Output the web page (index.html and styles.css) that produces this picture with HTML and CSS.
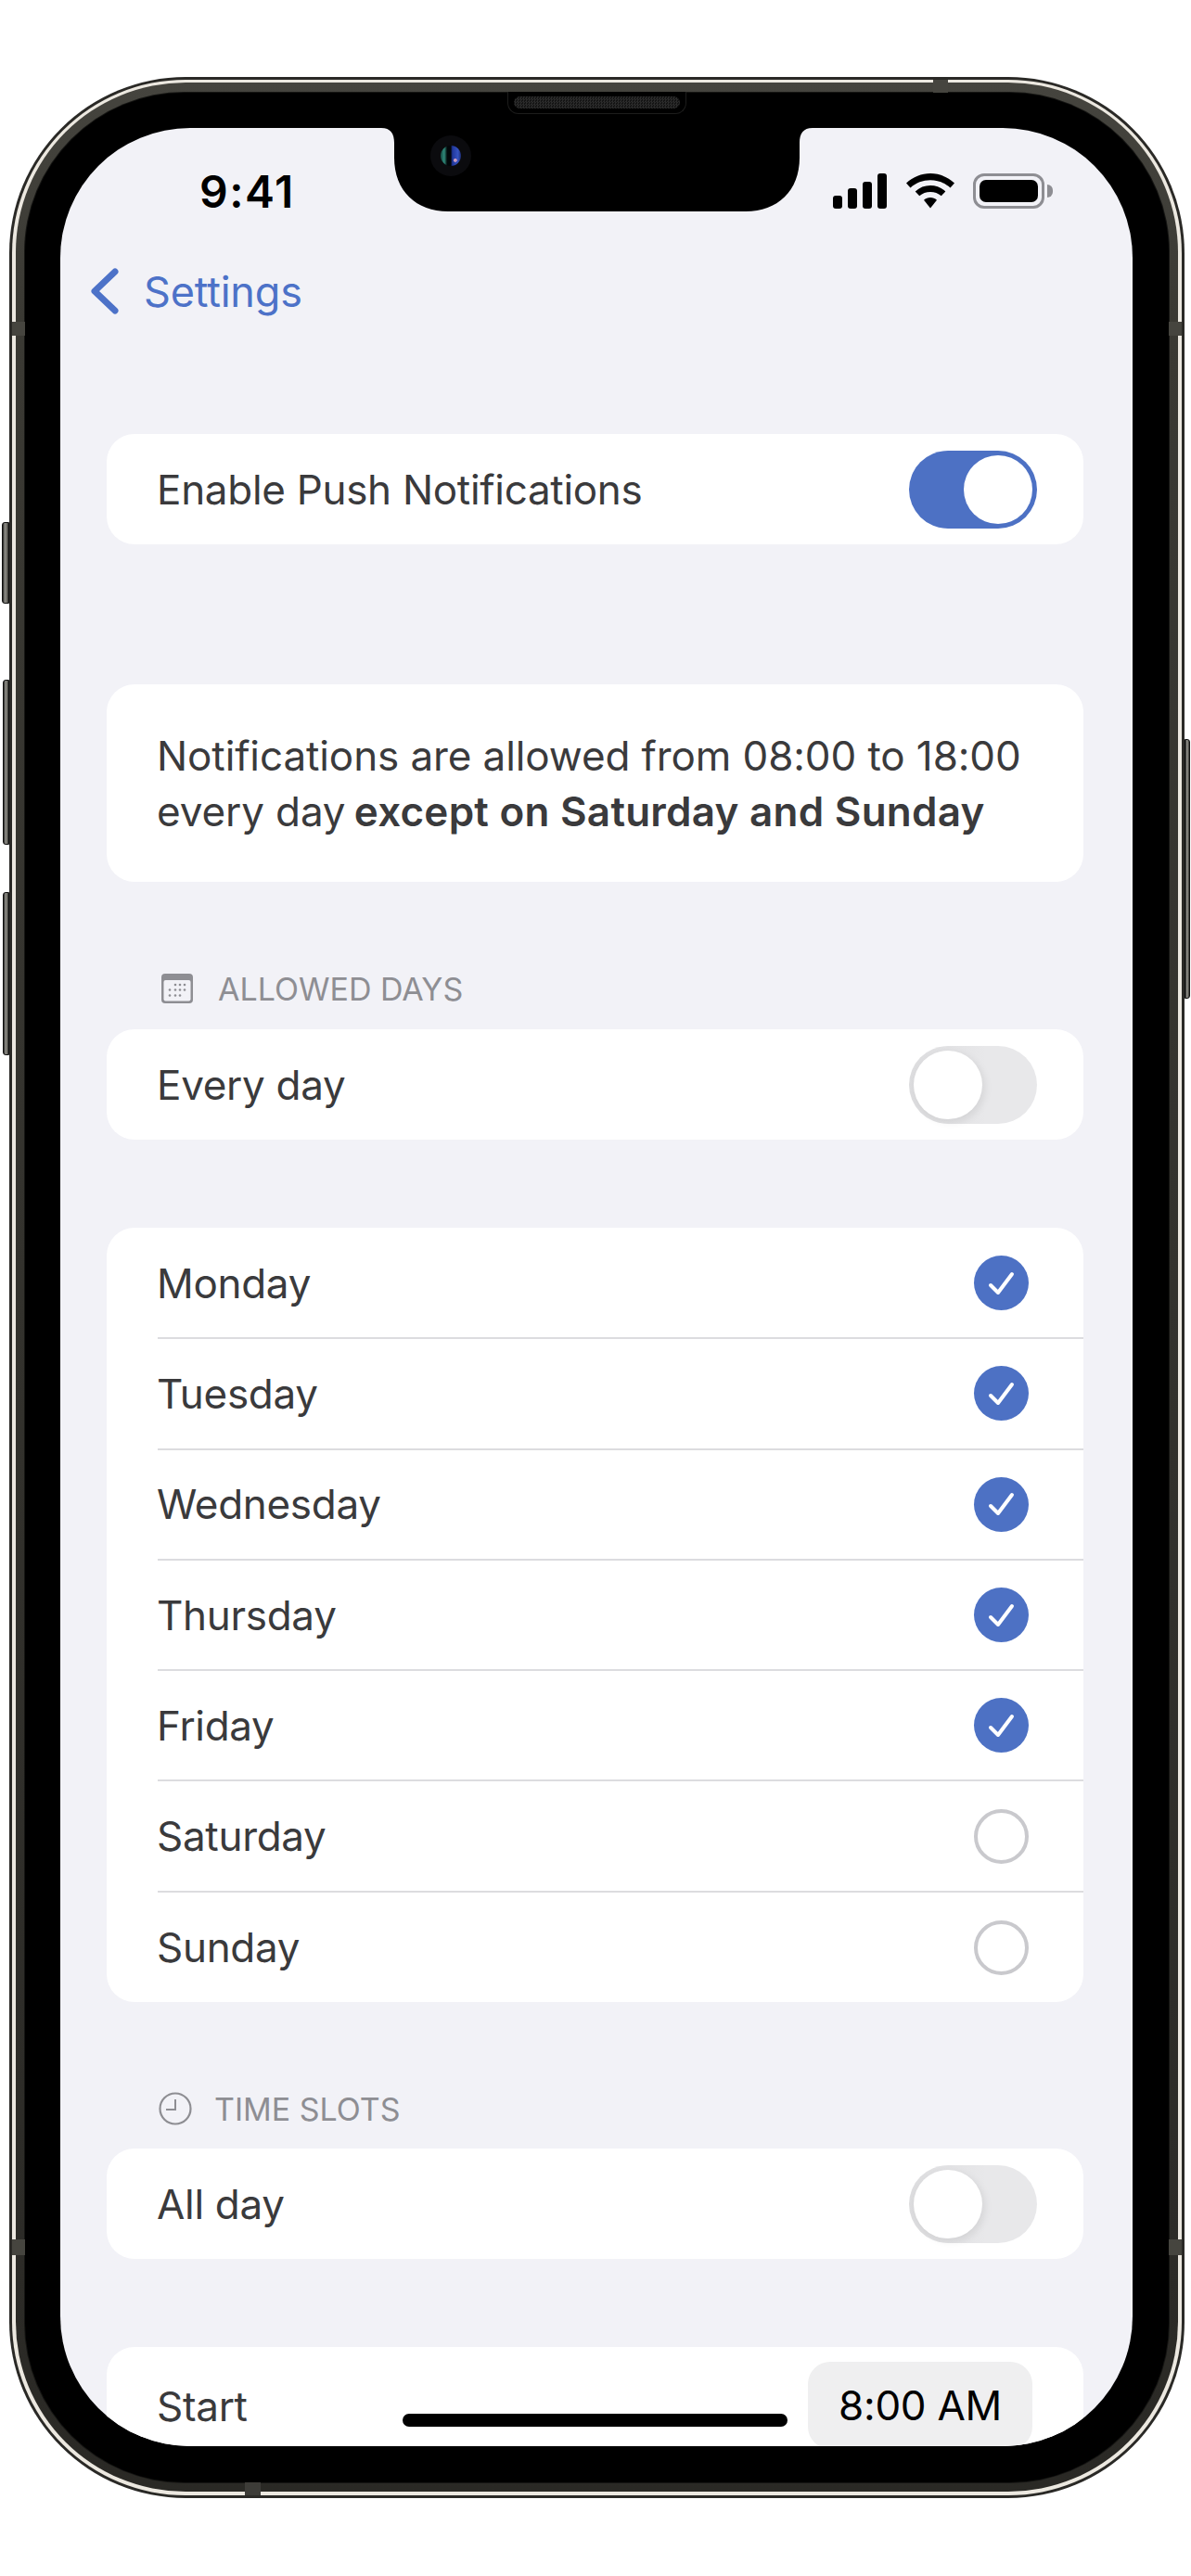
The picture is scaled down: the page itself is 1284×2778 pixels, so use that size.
FILE: index.html
```html
<!DOCTYPE html>
<html lang="en">
<head>
<meta charset="utf-8">
<title>Notification settings</title>
<link rel="stylesheet" href="styles.css">
</head>
<body>
<div class="device">
  <span class="side mute"></span>
  <span class="side vol-up"></span>
  <span class="side vol-down"></span>
  <span class="side power"></span>
  <span class="band band-lt"></span>
  <span class="band band-lb"></span>
  <span class="band band-rt"></span>
  <span class="band band-rb"></span>
  <span class="band band-top"></span>
  <span class="band band-bottom"></span>
  <div class="ring-light">
    <div class="ring-band">
      <div class="bezel">
        <div class="speaker"><span class="grille"></span></div>
        <div class="screen">
          <svg class="notch" width="465" height="90" viewBox="0 0 465 90"><path d="M0 0C10 0 14 6 14 16V32C14 68 38 90 72 90H393C427 90 451 68 451 32V16C451 6 455 0 465 0Z" fill="#000"/></svg>
          <div class="camera"><span class="lens"></span></div>
          <header class="status">
            <span class="clock">9:41</span>
            <div class="status-icons">
              <svg width="59" height="38" viewBox="0 0 59 38" fill="#000"><rect x="0" y="24" width="10" height="14" rx="3"/><rect x="16" y="16" width="10" height="22" rx="3"/><rect x="32" y="9" width="10" height="29" rx="3"/><rect x="48" y="0" width="10" height="38" rx="3"/></svg>
              <svg width="52" height="38" viewBox="0 0 52 38" fill="#000"><path d="M26 0C35.500 0 44.500 3.700 52 10.500L47.500 15.500C41.500 10.200 34 7.300 26 7.300S10.500 10.200 4.500 15.500L0 10.500C7.500 3.700 16.500 0 26 0Z"/><path d="M26 13C32 13 37.700 15.200 42.300 19.400L37.800 24.300C34.500 21.400 30.400 19.900 26 19.900S17.500 21.400 14.200 24.300L9.700 19.400C14.300 15.200 20 13 26 13Z"/><path d="M26 26C28.600 26 31 26.900 33 28.700L26 37.500 19 28.700C21 26.900 23.400 26 26 26Z"/></svg>
              <div class="battery"><span class="battery-fill"></span></div>
              <span class="battery-cap"></span>
            </div>
          </header>
          <nav class="nav">
            <svg width="30" height="50" viewBox="0 0 30 50" fill="none"><path d="M26 4L4 25L26 46" stroke="#4d72c8" stroke-width="7" stroke-linecap="round" stroke-linejoin="round"/></svg>
            <span class="nav-title">Settings</span>
          </nav>
          <main class="content">
            <section class="card push">
              <div class="row"><span>Enable Push Notifications</span><span class="toggle on"><span class="thumb"></span></span></div>
            </section>
            <section class="card summary">
              <p>Notifications are allowed from 08:00 to 18:00<br>every day <strong>except on Saturday and Sunday</strong></p>
            </section>
            <h2 class="section-label days-label">
              <svg width="34" height="32" viewBox="0 0 34 32"><rect x="0" y="0" width="34" height="32" rx="4" fill="#8e8e93"/><rect x="2.500" y="7" width="29" height="22.500" rx="2" fill="#f2f2f7"/><g fill="#8e8e93"><circle cx="15" cy="12" r="1.300"/><circle cx="20" cy="12" r="1.300"/><circle cx="25" cy="12" r="1.300"/><circle cx="9" cy="17.500" r="1.300"/><circle cx="15" cy="17.500" r="1.300"/><circle cx="20" cy="17.500" r="1.300"/><circle cx="25" cy="17.500" r="1.300"/><circle cx="9" cy="23.500" r="1.300"/><circle cx="15" cy="23.500" r="1.300"/><circle cx="20" cy="23.500" r="1.300"/></g></svg>
              <span>ALLOWED DAYS</span>
            </h2>
            <section class="card">
              <div class="row"><span>Every day</span><span class="toggle"><span class="thumb"></span></span></div>
            </section>
            <section class="card days">
              <div class="day"><span>Monday</span><span class="check on"><svg width="30" height="26" viewBox="0 0 30 26" fill="none"><path d="M3 15L11 23L26 3" stroke="#fff" stroke-width="4" stroke-linecap="round" stroke-linejoin="round"/></svg></span></div>
              <div class="day"><span>Tuesday</span><span class="check on"><svg width="30" height="26" viewBox="0 0 30 26" fill="none"><path d="M3 15L11 23L26 3" stroke="#fff" stroke-width="4" stroke-linecap="round" stroke-linejoin="round"/></svg></span></div>
              <div class="day"><span>Wednesday</span><span class="check on"><svg width="30" height="26" viewBox="0 0 30 26" fill="none"><path d="M3 15L11 23L26 3" stroke="#fff" stroke-width="4" stroke-linecap="round" stroke-linejoin="round"/></svg></span></div>
              <div class="day"><span>Thursday</span><span class="check on"><svg width="30" height="26" viewBox="0 0 30 26" fill="none"><path d="M3 15L11 23L26 3" stroke="#fff" stroke-width="4" stroke-linecap="round" stroke-linejoin="round"/></svg></span></div>
              <div class="day"><span>Friday</span><span class="check on"><svg width="30" height="26" viewBox="0 0 30 26" fill="none"><path d="M3 15L11 23L26 3" stroke="#fff" stroke-width="4" stroke-linecap="round" stroke-linejoin="round"/></svg></span></div>
              <div class="day"><span>Saturday</span><span class="check"></span></div>
              <div class="day"><span>Sunday</span><span class="check"></span></div>
            </section>
            <h2 class="section-label slots-label">
              <svg width="36" height="36" viewBox="0 0 36 36" fill="none" stroke="#8e8e93" stroke-width="2.200"><circle cx="18" cy="18" r="16.500"/><path d="M18 8V19H8" stroke-width="2"/></svg>
              <span>TIME SLOTS</span>
            </h2>
            <section class="card">
              <div class="row"><span>All day</span><span class="toggle"><span class="thumb"></span></span></div>
            </section>
            <section class="card start">
              <div class="row time-row"><span>Start</span><span class="pill">8:00 AM</span></div>
            </section>
          </main>
          <span class="home"></span>
        </div>
      </div>
    </div>
  </div>
</div>
</body>
</html>
```
FILE: styles.css
```css
* { box-sizing: border-box; }
html, body { margin: 0; padding: 0; background: #fff; }
body { height: 2778px; overflow: hidden; font-family: Inter, "Liberation Sans", sans-serif; color: #3a3a3c; }

.device {
  position: relative;
  width: 1267px;
  height: 2611px;
  margin: 83px 0 0 10px;
  padding: 3px;
  border-radius: 190px;
  background: #2a2926;
}
.ring-light { height: 100%; padding: 3px 4px 4px; border-radius: 187px; background: #ece8e0; }
.ring-band {
  height: 100%;
  padding: 11px 10px 10px;
  border-radius: 183px;
  background: linear-gradient(#45443e, #3a3933 10%, #2c2b27 90%, #2a2925);
}
.bezel {
  position: relative;
  height: 100%;
  padding: 38px 39px 39px 38px;
  border-radius: 172px;
  background: #000;
  box-shadow: 0 0 0 1px #151513;
}

.side { position: absolute; background: linear-gradient(90deg, #1c1c1a, #8b8a85 35%, #77766f 70%, #2c2b28); border: 1px solid #111; }
.mute { left: -8px; top: 480px; width: 8px; height: 88px; border-radius: 3px 0 0 3px; }
.vol-up { left: -7px; top: 650px; width: 7px; height: 178px; border-radius: 3px 0 0 3px; }
.vol-down { left: -7px; top: 879px; width: 7px; height: 176px; border-radius: 3px 0 0 3px; }
.power { right: -6px; top: 714px; width: 6px; height: 280px; border-radius: 0 3px 3px 0; }

.band { position: absolute; z-index: 2; background: #46453f; }
.band-lt { left: 3px; top: 264px; width: 14px; height: 15px; }
.band-lb { left: 3px; top: 2332px; width: 14px; height: 17px; }
.band-rt { right: 3px; top: 264px; width: 14px; height: 15px; }
.band-rb { right: 3px; top: 2332px; width: 14px; height: 17px; }
.band-top { left: 996px; top: 3px; width: 16px; height: 14px; }
.band-bottom { left: 254px; bottom: 3px; width: 17px; height: 14px; background: #3d3c38; }

.speaker {
  position: absolute;
  left: 520px;
  top: -1px;
  width: 193px;
  height: 24px;
  padding: 5px 6px;
  border: 1px solid #1d1d1c;
  border-top: 0;
  border-radius: 0 0 12px 12px;
  background: #000;
}
.grille {
  display: block;
  height: 13px;
  border-radius: 7px;
  background: repeating-conic-gradient(#2b2b2b 0 25%, #141414 0 50%) 0 0 / 3px 3px;
}

.screen {
  position: relative;
  height: 100%;
  overflow: hidden;
  border-radius: 140px;
  background: #f2f2f7;
}
.notch { position: absolute; left: 346px; top: 0; }
.camera {
  position: absolute;
  left: 399px;
  top: 8px;
  width: 44px;
  height: 44px;
  display: flex;
  align-items: center;
  justify-content: center;
  border-radius: 50%;
  background: #0b0b0e;
}
.lens {
  width: 22px;
  height: 22px;
  border-radius: 50%;
  background: radial-gradient(circle at 72% 72%, #c79ac0 0 7%, transparent 10%),
              linear-gradient(90deg, #164a44, #2f8a7a 18%, #02080a 32%, #02060a 50%, #20379b 58%, #3653c0 85%, #1c2c70);
}

.status { position: relative; height: 124px; }
.clock {
  position: absolute;
  left: 150px;
  top: 47px;
  font-size: 48px;
  line-height: 44px;
  font-weight: 600;
  letter-spacing: 1.5px;
  color: #000;
}
.status-icons {
  position: absolute;
  left: 833px;
  top: 49px;
  display: flex;
  gap: 20px;
  align-items: flex-start;
}
.battery {
  width: 77px;
  height: 38px;
  padding: 4px;
  border: 3px solid #8e8e93;
  border-radius: 12px;
}
.battery-fill { display: block; height: 100%; border-radius: 7px; background: #000; }
.battery-cap {
  width: 6px;
  height: 14px;
  margin: 12px 0 0 -17px;
  border-radius: 0 7px 7px 0;
  background: #8e8e93;
}

.nav {
  height: 104px;
  display: flex;
  align-items: center;
  gap: 27px;
  padding-left: 33px;
}
.nav-title { font-size: 45px; letter-spacing: -0.2px; color: #4d72c8; }

.content { padding: 102px 53px 0 50px; font-size: 44px; letter-spacing: -0.3px; }
.card { border-radius: 30px; background: #fff; }
.push { height: 119px; margin-bottom: 151px; }
.row {
  height: 119px;
  display: flex;
  align-items: center;
  justify-content: space-between;
  padding: 1px 50px 0 54px;
}
.summary { height: 213px; padding: 47px 40px 0 54px; }
.summary p { margin: 0; line-height: 60px; letter-spacing: -0.1px; }
.summary strong { margin-left: -3px; font-weight: 600; letter-spacing: 0.25px; }

.section-label {
  display: flex;
  align-items: center;
  margin: 0;
  padding-left: 59px;
  font-size: 34px;
  font-weight: 400;
  letter-spacing: 0;
  color: #8e8e93;
}
.days-label { height: 159px; padding-top: 71px; gap: 27px; }
.slots-label { height: 158px; padding-top: 72px; padding-left: 56px; gap: 24px; }

.toggle {
  position: relative;
  display: block;
  width: 138px;
  height: 84px;
  border-radius: 42px;
  background: linear-gradient(90deg, #dcdcde, #e8e8ea 60%);
}
.thumb {
  position: absolute;
  left: 5px;
  top: 5px;
  width: 74px;
  height: 74px;
  border-radius: 50%;
  background: #fff;
  box-shadow: 3px 3px 9px rgba(0, 0, 0, 0.08);
}
.toggle.on { background: #4d71c4; }
.toggle.on .thumb { left: 59px; box-shadow: none; }

.days { height: 835px; margin-top: 95px; padding-top: 1px; }
.day {
  height: 119.300px;
  margin-left: 55px;
  padding-right: 59px;
  display: flex;
  align-items: center;
  justify-content: space-between;
  border-bottom: 2px solid #dcdcdf;
}
.day > span:first-child { margin-left: -1px; }
.day:last-child { border-bottom: 0; }
.check {
  width: 59px;
  height: 59px;
  display: flex;
  align-items: center;
  justify-content: center;
  border: 4px solid #c9c9cd;
  border-radius: 50%;
}
.check.on { border: 0; background: #4d71c4; }

.start { height: 240px; margin-top: 95px; }
.time-row { height: 126px; padding-right: 55px; align-items: flex-start; }
.time-row > span:first-child { margin-top: 36px; }
.pill {
  width: 242px;
  height: 94px;
  margin-top: 15px;
  border-radius: 24px;
  background: #efeff0;
  font-size: 44px;
  line-height: 94px;
  text-align: center;
  color: #000;
}

.home {
  position: absolute;
  left: 369px;
  bottom: 21px;
  width: 415px;
  height: 14px;
  border-radius: 7px;
  background: #000;
}
```
